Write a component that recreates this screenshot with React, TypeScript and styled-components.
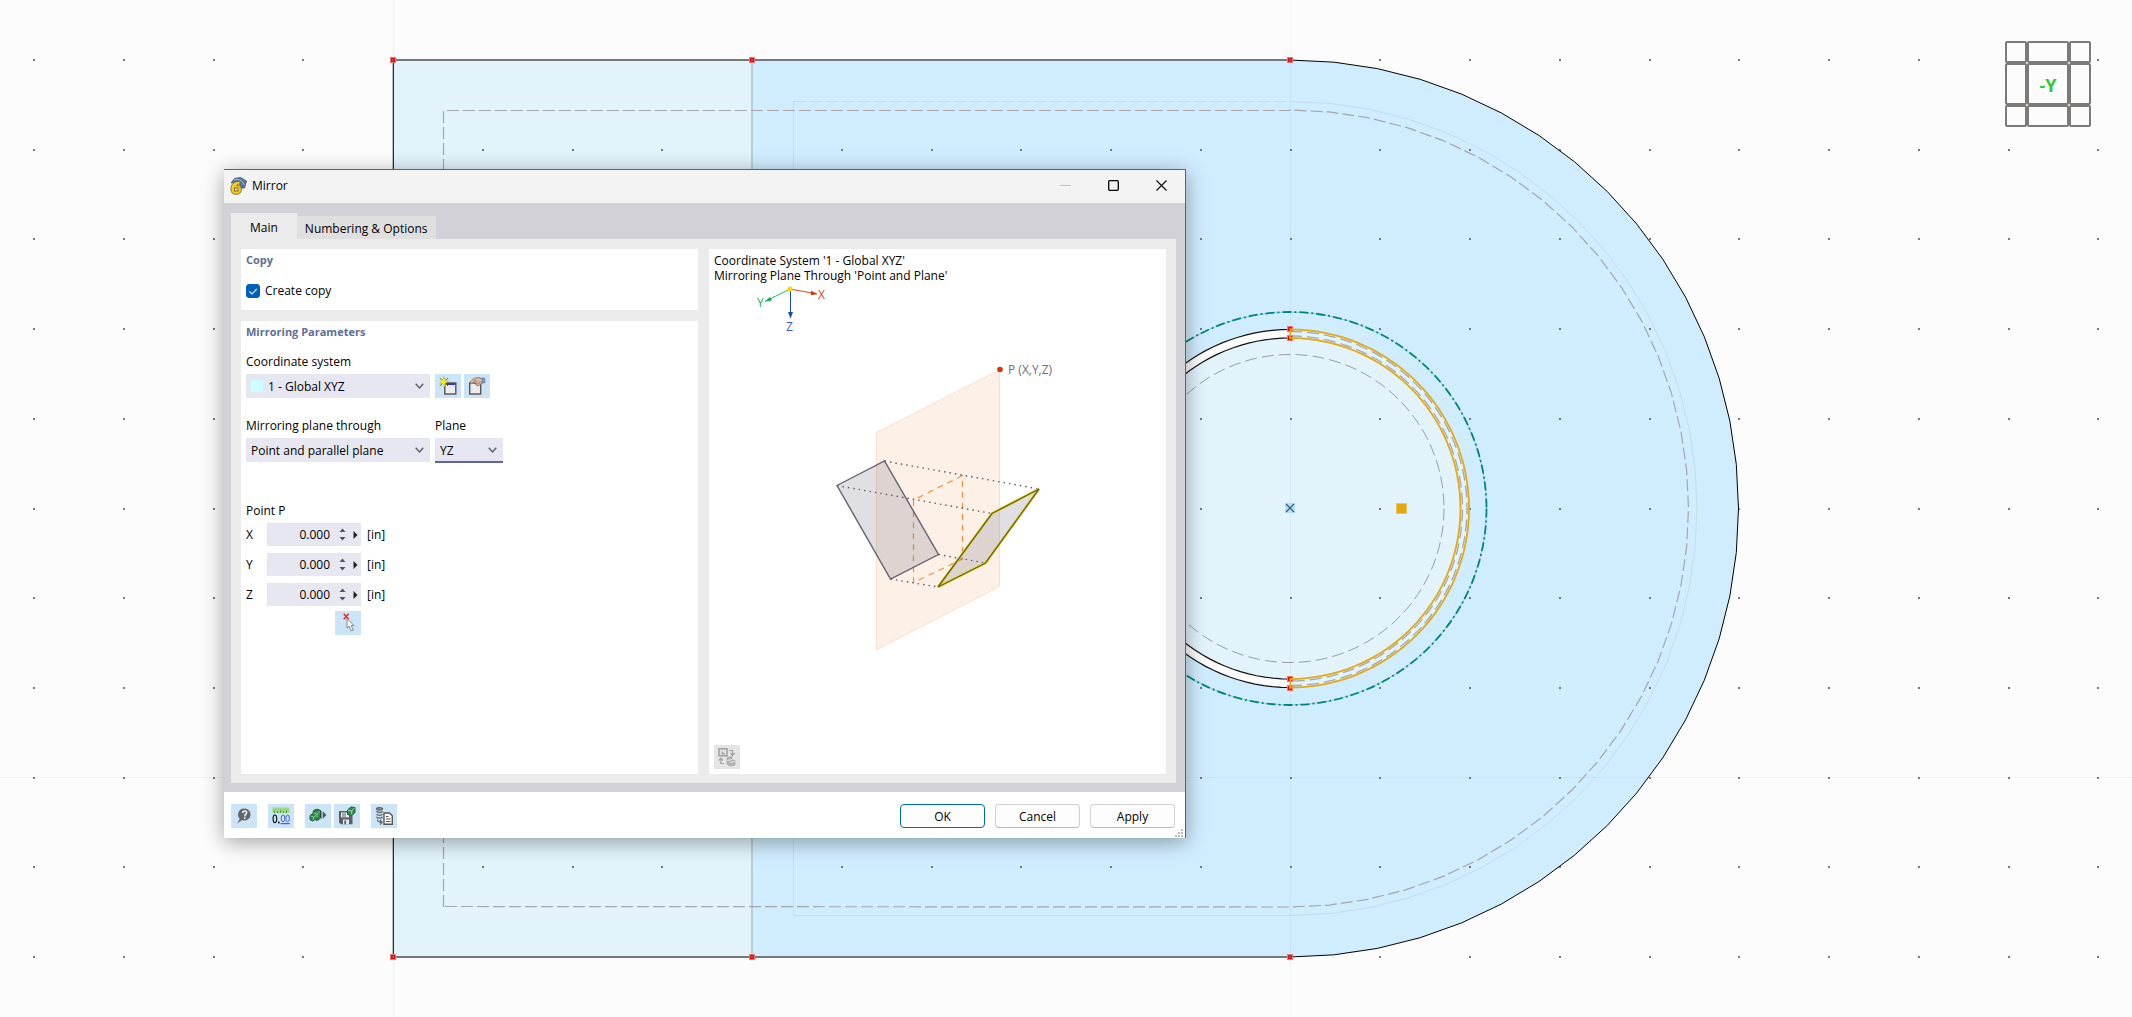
import React, { useState } from 'react';
import styled, { createGlobalStyle } from 'styled-components';

const Global = createGlobalStyle`
  *, *::before, *::after { box-sizing: border-box; }
  body { margin: 0; background: #fcfcfc; overflow: hidden; }
  body, button, input, select { font-family: "Open Sans", "Noto Sans", sans-serif; font-size: 12px; color: #000; }
  svg { display: block; }
`;

const Workspace = styled.main`
  position: relative;
  width: 100%;
  height: 100vh;
  overflow: hidden;
`;

const Scene = styled.svg`
  width: 100%;
  height: 100%;
`;

/* ---------- view cube ---------- */

const ViewCube = styled.nav`
  position: absolute;
  top: 41px;
  right: 41px;
  display: grid;
  grid-template: 22px 42px 22px / 22px 42px 22px;
`;

const CubeFace = styled.button`
  display: flex;
  align-items: center;
  justify-content: center;
  padding: 2px 0 0;
  border: 2px solid #7c7979;
  border-radius: 2px;
  background: #fcfcfc;
  color: #33cc33;
  font: bold 18px "Noto Sans", "Open Sans", sans-serif;
`;

/* ---------- dialog frame ---------- */

const Dialog = styled.section`
  position: absolute;
  left: 224px;
  top: 169px;
  width: 962px;
  max-width: 100%;
  display: flex;
  flex-direction: column;
  border-top: 1px solid #606468;
  border-right: 1px solid #606468;
  background: #fff;
  box-shadow: 0 4px 20px rgba(0, 0, 0, 0.36);
`;

const TitleBar = styled.header`
  display: flex;
  align-items: center;
  height: 33px;
  padding: 0 0 2px 6px;
  gap: 5px;
  background: #f3f3f3;
`;

const Title = styled.h1`
  flex: 1;
  margin: 0;
  font-size: 12px;
  font-weight: 400;
  line-height: 18px;
`;

const WindowControls = styled.div`
  display: flex;
`;

const WindowButton = styled.button`
  display: flex;
  align-items: center;
  justify-content: center;
  width: 48px;
  height: 31px;
  padding: 0;
  border: 0;
  background: none;
`;

const Body = styled.div`
  padding: 10px 9px 9px 7px;
  background: #d2d1d7;
`;

const TabList = styled.div`
  display: flex;
  align-items: flex-end;
`;

const Tab = styled.button<{ $active?: boolean }>`
  height: ${p => (p.$active ? 26 : 23)}px;
  padding: ${p => (p.$active ? '4px 19px 0' : '2px 8px 0')};
  border: 0;
  background: ${p => (p.$active ? '#ebebeb' : '#dfdfdf')};
  line-height: 20px;
`;

const TabPanel = styled.div`
  display: grid;
  grid-template-columns: 1fr 1fr;
  gap: 11px;
  min-height: 544px;
  padding: 10px 10px 9px;
  background: #ebebeb;
`;

const Column = styled.div`
  display: flex;
  flex-direction: column;
  gap: 11px;
`;

const Group = styled.section<{ $fill?: boolean }>`
  flex: ${p => (p.$fill ? '1' : 'none')};
  padding: 1px 5px 11px;
  background: #fff;
`;

const GroupTitle = styled.h2`
  margin: 0;
  color: #5c6e95;
  font-size: 11px;
  font-weight: 700;
  line-height: 20px;
`;

/* ---------- form parts ---------- */

const CheckLabel = styled.label`
  display: flex;
  align-items: center;
  gap: 5px;
  margin-top: 13px;
  line-height: 16px;
`;

const CheckBox = styled.span`
  position: relative;
  width: 14px;
  height: 14px;

  input {
    appearance: none;
    display: block;
    width: 14px;
    height: 14px;
    margin: 0;
    border: 1px solid #8a8a8a;
    border-radius: 3px;
    background: #fff;
  }
  input:checked { border-color: #005fb8; background: #005fb8; }
  svg { position: absolute; inset: 0; pointer-events: none; }
`;

const FieldRow = styled.div<{ $top: number }>`
  display: flex;
  align-items: flex-end;
  gap: 5px;
  margin-top: ${p => p.$top}px;
`;

const Field = styled.div<{ $width: number }>`
  display: flex;
  flex-direction: column;
  gap: 3px;
  width: ${p => p.$width}px;
`;

const FieldLabel = styled.label`
  line-height: 18px;
  white-space: nowrap;
`;

const SelectBox = styled.div<{ $focused?: boolean; $swatch?: boolean }>`
  position: relative;
  height: 24px;
  background: #e7e7f2;
  box-shadow: ${p => (p.$focused ? '0 1px 0 #6062a8, inset 0 -1px 0 #6062a8' : 'none')};

  select {
    appearance: none;
    width: 100%;
    height: 24px;
    padding: 0 20px 0 ${p => (p.$swatch ? 22 : 5)}px;
    border: 0;
    outline: 0;
    background: transparent;
  }
  svg { position: absolute; right: 6px; top: 9px; pointer-events: none; }
`;

const Swatch = styled.span`
  position: absolute;
  left: 5px;
  top: 6px;
  width: 12px;
  height: 12px;
  background: #ccffff;
`;

const ButtonPair = styled.div`
  display: flex;
  gap: 3px;
`;

const ToolButton = styled.button<{ $muted?: boolean }>`
  display: flex;
  align-items: center;
  justify-content: center;
  width: 26px;
  height: 24px;
  padding: 0;
  border: 0;
  background: ${p => (p.$muted ? '#e5e5e5' : '#cce4f7')};
`;

const PointFields = styled.fieldset`
  width: 137px;
  margin: 40px 0 0;
  padding: 0;
  border: 0;

  legend { padding: 0; margin-bottom: 3px; line-height: 18px; }
`;

const PointGrid = styled.div`
  display: grid;
  grid-template-columns: 21px 94px 22px;
  row-gap: 7px;
  align-items: center;
`;

const SpinBox = styled.div`
  display: flex;
  align-items: center;
  height: 23px;
  background: #e7e7f2;

  input {
    width: 63px;
    padding: 0;
    border: 0;
    outline: 0;
    background: transparent;
    text-align: right;
  }
`;

const Stepper = styled.div`
  display: flex;
  flex-direction: column;
  gap: 1px;
  margin-left: 9px;
`;

const MiniButton = styled.button<{ $gap?: boolean }>`
  display: flex;
  align-items: center;
  justify-content: center;
  width: 7px;
  height: 8px;
  margin-left: ${p => (p.$gap ? 6 : 0)}px;
  padding: 0;
  border: 0;
  background: none;
`;

const Unit = styled.span`
  padding-left: 6px;
`;

const PickRow = styled.div`
  display: flex;
  justify-content: flex-end;
  margin-top: 5px;
  padding-right: 22px;
`;

/* ---------- preview ---------- */

const Preview = styled.section`
  display: flex;
  flex-direction: column;
  padding: 4px 5px 5px;
  background: #fff;
`;

const Caption = styled.p`
  margin: 0;
  line-height: 15px;
`;

const Diagram = styled.svg`
  flex: 1;
  width: 100%;
  min-height: 0;

  text { font: 12px "Open Sans", "Noto Sans", sans-serif; }
`;

/* ---------- footer ---------- */

const Footer = styled.footer`
  position: relative;
  display: flex;
  align-items: center;
  justify-content: space-between;
  padding: 12px 10px 10px 7px;
`;

const ToolGroups = styled.div`
  display: flex;
  gap: 11px;
`;

const Actions = styled.div`
  display: flex;
  gap: 10px;
`;

const ActionButton = styled.button<{ $primary?: boolean }>`
  width: 85px;
  height: 24px;
  padding: 2px 0 0;
  border: 1px solid ${p => (p.$primary ? '#0067c0' : '#d0d0d0')};
  border-bottom-color: ${p => (p.$primary ? '#0067c0' : '#b8b8b8')};
  border-radius: 4px;
  background: #fdfdfd;
  line-height: 18px;
`;

const Grip = styled.svg`
  position: absolute;
  right: 2px;
  bottom: 0;
`;

/* ---------- scene geometry ---------- */

const CX = 1290;
const CY = 508.5;
const TOP = 60;
const BOTTOM = 957;

function arc(r: number, from = -90, to = 90, steps = 32) {
  return Array.from({ length: steps + 1 }, (_, i) => {
    const a = ((from + ((to - from) * i) / steps) * Math.PI) / 180;
    return `${(CX + r * Math.cos(a)).toFixed(2)},${(CY + r * Math.sin(a)).toFixed(2)}`;
  }).join(' L');
}

function GridDots() {
  const dots: React.ReactNode[] = [];
  for (let row = 0; row < 11; row++) {
    for (let col = -4; col < 20; col++) {
      dots.push(
        <rect
          key={`${row}:${col}`}
          x={Math.round(392 + col * 89.75)}
          y={Math.round(59 + row * 89.7)}
          width="2"
          height="2"
        />,
      );
    }
  }
  return <g fill="#77777b" shapeRendering="crispEdges">{dots}</g>;
}

function Node({ x, y }: { x: number; y: number }) {
  return (
    <g shapeRendering="crispEdges">
      <rect x={x - 3} y={y - 3} width="6" height="6" fill="#ff7070" />
      <rect x={x - 2} y={y - 2} width="4" height="4" fill="#f00" />
      <rect x={x - 1} y={y - 1} width="2" height="2" fill="#7d6565" />
    </g>
  );
}

function Model() {
  return (
    <Scene viewBox="0 0 2132 1017" preserveAspectRatio="xMinYMin slice" aria-label="Model view">
      <path d="M0 777.5H2132M1290.5 0V1017" stroke="#f1f4f4" />
      <path d="M393.5 0V1017" stroke="#c8ffff" />
      <rect x="393" y={TOP} width="359" height={BOTTOM - TOP} fill="#e2f3fc" />
      <path d={`M752,${TOP} L${arc(448.5)} L752,${BOTTOM}Z`} fill="#d0edff" />
      <circle cx={CX} cy={CY} r="179" fill="#fcfcfc" />
      <path d={`M${arc(179, -90, 90, 64)}Z`} fill="#e2f3fc" />
      <circle cx={CX} cy={CY} r="170" fill="#e2f3fc" />
      <path d="M1290.5 60V957M752 777.5H1650" stroke="#8fb8cc" strokeOpacity="0.16" />
      <GridDots />
      <g fill="none">
        <path d="M752 60V957" stroke="#b9ccd7" strokeWidth="2" />
        <path d={`M393 ${TOP}H1290M393 ${BOTTOM}H1290`} stroke="#75797e" strokeWidth="2" />
        <path d="M393.5 60V957" stroke="#20343a" />
        <path d="M392.5 60V957" stroke="#b8c0c0" />
        <path d={`M${arc(448.5)}`} stroke="#000" />
        <path d="M793.5 101.5H1290" stroke="#c3dde9" strokeDasharray="13 3" />
        <path d={`M793.5 101V915.5H1290M${arc(407)}`} stroke="#c3dde9" />
        <path
          d={`M443.5 907V110.5H${CX} L${arc(398.5)} L443.5 906.5`}
          stroke="#a4a6ac"
          strokeDasharray="12 4"
          strokeWidth="1.2"
        />
        <circle cx={CX} cy={CY} r="154" stroke="#989ea4" strokeDasharray="12 5" />
        <circle cx={CX} cy={CY} r="196.5" stroke="#9cc9cf" />
        <circle cx={CX} cy={CY} r="196.5" stroke="#008482" strokeWidth="1.8" strokeDasharray="9 3 2 3" />
        <path d={`M${arc(179, 90, 270, 64)}M${arc(170.5, 90, 270, 64)}`} stroke="#111" strokeWidth="1.2" />
        <path
          d={`M${arc(177, -90, 90, 64)}M${arc(172.5, -90, 90, 64)}`}
          stroke="#a3a6ab"
          strokeDasharray="12 5"
          strokeWidth="1.3"
        />
      </g>
      <Node x={393} y={60} />
      <Node x={752} y={60} />
      <Node x={1290} y={60} />
      <Node x={393} y={957} />
      <Node x={752} y={957} />
      <Node x={1290} y={957} />
      <Node x={1290} y={329} />
      <Node x={1290} y={338} />
      <Node x={1290} y={679} />
      <Node x={1290} y={688} />
      <path
        d={`M1290.5,329.5 L${arc(179, -90, 90, 64)} L1290.5,679 L${arc(170.5, 90, -90, 64)}Z`}
        fill="none"
        stroke="#e3a812"
        strokeWidth="1.8"
      />
      <rect x="1285" y="503" width="10" height="10" fill="#b2e2fb" />
      <path d="M1286 512L1294 504M1286 504L1294 512" stroke="#40565f" strokeWidth="1.2" fill="none" />
      <rect x="1396" y="503" width="11" height="11" fill="#eac565" />
      <rect x="1397" y="504" width="9" height="9" fill="#e3a812" />
    </Scene>
  );
}

/* ---------- icons ---------- */

const Chevron = () => (
  <svg width="9" height="7" viewBox="0 0 9 7" fill="none" stroke="#5a5a60" strokeWidth="1.3">
    <path d="M.7 .7L4.5 5L8.3 .7" />
  </svg>
);

const AppIcon = () => (
  <svg width="17" height="18" viewBox="0 0 17 18">
    <path d="M1 6L4.5 1.5L10.5 .5L16.5 4L14.5 11L11 11L9 5L4 5.5Z" fill="#55789e" stroke="#3e4d60" strokeWidth=".8" />
    <path d="M4 3C8 1.5 12 3 14.5 8" fill="none" stroke="#a5c3dc" />
    <path
      d="M10 4.6C4 3.4 .8 7.6 .9 12.3C1 15.8 3 17.4 6 17.4C9.4 17.4 11.4 15.6 11.4 12.3C11.4 9.6 9.6 8.4 6.6 8.6C7.2 7.4 8.2 7.2 10 7.3Z"
      fill="#f2cd22"
      stroke="#75601a"
      strokeWidth=".8"
    />
    <rect x="4.6" y="11" width="3.4" height="3" fill="#fff0a0" stroke="#6b5a1d" strokeWidth=".9" />
  </svg>
);

const NewIcon = () => (
  <svg width="18" height="20" viewBox="0 0 18 20">
    <rect x="5.8" y="7" width="11" height="11" fill="#ececec" stroke="#555" strokeWidth="1.4" />
    <rect x="6.5" y="7" width="9.7" height="2" fill="#3038c8" />
    <path d="M.8 2L9 10M.8 10L9 2" stroke="#6b6b50" />
    <path d="M4.9 .8L6.1 4.3L9.7 5.2L6.5 6.9L6 10.6L3.7 7.8L.5 8.1L2.6 5.4L1 2.8L4 3.6Z" fill="#f5ee1d" stroke="#aaa324" strokeWidth=".5" />
  </svg>
);

const EditIcon = () => (
  <svg width="18" height="20" viewBox="0 0 18 20">
    <rect x="1.7" y="7" width="11" height="11" fill="#ececec" stroke="#555" strokeWidth="1.4" />
    <path d="M10 2L17 1.5L17.5 7L13 8Z" fill="#6f97cc" />
    <path d="M2 6.2L6 2.3L11 1.5L15 3.5L13.2 8L10 10L7.8 9L8.3 7L5.5 6.2L3.5 8Z" fill="#d9b89c" stroke="#80644f" strokeWidth=".7" />
    <path d="M6 4.5L9 5M9.5 7.8L12.5 6" stroke="#80644f" strokeWidth=".7" />
  </svg>
);

const PickIcon = () => (
  <svg width="14" height="20" viewBox="0 0 14 20">
    <path d="M2.7 .7L7.7 6.2M7.7 .7L2.7 6.2" stroke="#e22" strokeWidth="1.4" />
    <path d="M6 5.5V15L8.2 13.2L10.2 18L12.3 17L10.2 12.6H13Z" fill="#fff" stroke="#777" strokeWidth=".9" />
  </svg>
);

const SwapIcon = () => (
  <svg width="18" height="20" viewBox="0 0 18 20" fill="none" stroke="#a3a3a3">
    <rect x="1" y="1.8" width="8" height="7" strokeWidth="1.6" />
    <path d="M3.5 7.5V4.5H5V6H7V7.5Z" fill="#a3a3a3" stroke="none" />
    <path d="M11 3.5H14.5V8M12.5 6L14.5 8.3L16.7 6" strokeWidth="1.2" />
    <path d="M2.8 11.5V16.5H6M.8 13.5L2.8 11.2L4.8 13.5" strokeWidth="1.2" />
    <path d="M9 10.5L14 9.5V13L17 13.5V18L12 19L9 17Z" fill="#b4b4b4" stroke="#a3a3a3" strokeWidth=".7" />
    <path d="M9.5 13.5L14 12.5M12 15.5L16.5 14.5" stroke="#e8e8e8" />
  </svg>
);

const HelpIcon = () => (
  <svg width="16" height="18" viewBox="0 0 16 18">
    <path d="M8.5 1.5A6 6 0 1 1 6.2 13L1.2 16.5L3.8 11.7A6 6 0 0 1 8.5 1.5Z" fill="#666" />
    <path d="M6.8 6C6.8 3.4 10.6 3.4 10.6 5.7C10.6 7.5 8.7 7.3 8.7 9.4M8.7 10.5V12" stroke="#e8f3fc" strokeWidth="1.6" fill="none" />
  </svg>
);

const UnitsIcon = () => (
  <svg width="18" height="20" viewBox="0 0 18 20">
    <rect x=".5" y="1.5" width="17" height="5.5" fill="#9bdb7f" />
    <path d="M2.5 4V7M5.5 5V7M8.5 4V7M11.5 5V7M14.5 4V7" stroke="#5f9c4c" />
    <ellipse cx="2.9" cy="12.8" rx="1.8" ry="3.8" fill="none" stroke="#111" strokeWidth="1.2" />
    <rect x="6" y="15.6" width="1.6" height="1.8" fill="#111" />
    <g fill="none" stroke="#3d63e0">
      <ellipse cx="11" cy="12.4" rx="1.8" ry="3.4" />
      <ellipse cx="15.6" cy="12.4" rx="1.8" ry="3.4" />
      <path d="M8.6 17.6H17.8" strokeWidth="1.2" />
    </g>
  </svg>
);

const LoadIcon = () => (
  <svg width="18" height="18" viewBox="0 0 18 18">
    <path d="M1 8.5L4 6.5L4.5 3.5L8 2.2L11.5 3.5V11L8.5 13.5L6 12.5L3.5 14L1 12.5Z" fill="#2d8a4c" stroke="#1c5230" />
    <path d="M4.5 6L8 7L11 4.5M8 7V10M1.5 9L4.5 10L7 8.5M4.5 10V13" stroke="#8bd39f" fill="none" strokeWidth=".9" />
    <path d="M12.5 4V12" stroke="#8494a1" />
    <path d="M13.7 4.2L17.4 8L13.7 11.8Z" fill="#555" />
  </svg>
);

const SaveIcon = () => (
  <svg width="18" height="20" viewBox="0 0 18 20">
    <path d="M1 5H14.5V18.3H3L1 16.3Z" fill="#5f5f5f" />
    <rect x="3" y="6.5" width="8" height="4.8" fill="#e8f3fc" />
    <path d="M4 8H8M4 10H8" stroke="#5f5f5f" />
    <rect x="5" y="13.5" width="6" height="4.8" fill="#dcebf8" />
    <rect x="6.3" y="14.5" width="1.8" height="3.8" fill="#5f5f5f" />
    <path d="M9.5 4L13 1L17 1.5V6.5L14 9.5L9.5 8.5Z" fill="#2d8a4c" stroke="#1c6335" />
    <path d="M10 4.3L13.7 5L16.5 2M13.7 5V8.5" stroke="#9bdfae" fill="none" />
  </svg>
);

const ExportIcon = () => (
  <svg width="18" height="20" viewBox="0 0 18 20">
    <g fill="none" stroke="#666" strokeWidth="1.4">
      <ellipse cx="4.5" cy="2.8" rx="3" ry="1.2" fill="#999" />
      <path d="M1.5 5.2C2.5 7 6.5 7 7.5 5.2M1.5 8C2.5 9.8 6.5 9.8 7.5 8M1.5 10.8C2.5 12.5 6.5 12.5 7.5 10.8" />
      <path d="M2.5 13.5C2.5 16 4 16.3 6.8 16.3M5 14L7.2 16.3L5 18.5" strokeWidth="1.2" />
    </g>
    <path d="M9 7H14.5L17.3 9.8V18.3H9Z" fill="#fff" stroke="#555" strokeWidth="1.4" />
    <path d="M11 10.5H13.5M11 13H15.5M11 15.5H15.5" stroke="#555" />
  </svg>
);

/* ---------- dialog content ---------- */

function PreviewDiagram() {
  return (
    <Diagram viewBox="714 283 447 462" preserveAspectRatio="xMidYMid meet" aria-label="Point and plane mirroring">
      <g fill="none">
        <path d="M790 289L817 294" stroke="#cf4a20" />
        <path d="M811 290.8L817.5 294L811 295.2Z" fill="#cf3a08" />
        <path d="M790 289L765 301.5" stroke="#2cb065" />
        <path d="M765 301.5L770 296.9L772 300.6Z" fill="#0da54a" />
        <path d="M790.5 289V318" stroke="#1848c8" />
        <path d="M788 312H793L790.5 318.5Z" fill="#1848c8" />
        <circle cx="790" cy="289" r="2.6" fill="#f7dc00" />
      </g>
      <text x="818" y="299" fill="#cf4a20">X</text>
      <text x="757" y="307" fill="#24ab5c">Y</text>
      <text x="786" y="331" fill="#3c5cd2">Z</text>
      <path d="M876.5 432.5L999.5 370V586.5L876.5 649.5Z" fill="#fdf1e7" stroke="#fadfca" />
      <path d="M962.5 475.5L913.5 500V582.5L962.5 559Z" fill="none" stroke="#f2913c" strokeWidth="1.2" strokeDasharray="6 5" />
      <path
        d="M884.5 461L1039 489M837 485.5L992 513.5M938.5 554.5L985.5 563M890.5 579L938 587"
        fill="none"
        stroke="#5f5a6c"
        strokeWidth="1.4"
        strokeDasharray="1.5 4"
      />
      <path d="M837 485.5L884.5 461L938.5 554.5L890.5 579Z" fill="#60607a" fillOpacity=".2" stroke="#676171" strokeWidth="1.4" />
      <path d="M992 513.5L1039 489L985.5 563L938 587Z" fill="#60607a" fillOpacity=".2" stroke="#eadb24" strokeWidth="2.8" />
      <path d="M992 513.5L1039 489L985.5 563L938 587Z" fill="none" stroke="#655d35" strokeWidth="1.3" />
      <circle cx="1000" cy="369.5" r="2.8" fill="#cf3a08" />
      <text x="1008" y="374" fill="#706d7c">P (X,Y,Z)</text>
    </Diagram>
  );
}

function Coordinate({ axis }: { axis: string }) {
  const [value, setValue] = useState('0.000');
  const step = (by: number) => setValue(v => ((Number(v) || 0) + by).toFixed(3));
  const id = `point-${axis}`;
  return (
    <>
      <label htmlFor={id}>{axis}</label>
      <SpinBox>
        <input id={id} value={value} onChange={e => setValue(e.target.value)} />
        <Stepper>
          <MiniButton aria-label={`Increase ${axis}`} onClick={() => step(1)}>
            <svg width="7" height="4" viewBox="0 0 7 4"><path d="M.5 4L3.5 .5L6.5 4Z" fill="#555" /></svg>
          </MiniButton>
          <MiniButton aria-label={`Decrease ${axis}`} onClick={() => step(-1)}>
            <svg width="7" height="4" viewBox="0 0 7 4"><path d="M.5 0L3.5 3.5L6.5 0Z" fill="#555" /></svg>
          </MiniButton>
        </Stepper>
        <MiniButton $gap aria-label={`${axis} options`}>
          <svg width="5" height="8" viewBox="0 0 5 8"><path d="M.5 0L4.5 4L.5 8Z" fill="#222" /></svg>
        </MiniButton>
      </SpinBox>
      <Unit>[in]</Unit>
    </>
  );
}

export default function App() {
  const [copy, setCopy] = useState(true);
  return (
    <>
      <Global />
      <Workspace>
        <Model />
        <ViewCube aria-label="View cube">
          {Array.from({ length: 9 }, (_, i) => (
            <CubeFace key={i} aria-label={i === 4 ? undefined : `View ${i + 1}`}>{i === 4 ? '-Y' : null}</CubeFace>
          ))}
        </ViewCube>

        <Dialog role="dialog" aria-labelledby="dialog-title">
          <TitleBar>
            <AppIcon />
            <Title id="dialog-title">Mirror</Title>
            <WindowControls>
              <WindowButton aria-label="Minimize" disabled>
                <svg width="11" height="11"><path d="M0 5.5H11" stroke="#c2c2c2" /></svg>
              </WindowButton>
              <WindowButton aria-label="Maximize">
                <svg width="11" height="11"><rect x=".7" y=".7" width="9.6" height="9.6" rx="1" fill="none" stroke="#000" strokeWidth="1.3" /></svg>
              </WindowButton>
              <WindowButton aria-label="Close">
                <svg width="11" height="11"><path d="M.5 .5L10.5 10.5M10.5 .5L.5 10.5" stroke="#111" strokeWidth="1.2" /></svg>
              </WindowButton>
            </WindowControls>
          </TitleBar>

          <Body>
            <TabList role="tablist">
              <Tab $active role="tab" aria-selected="true">Main</Tab>
              <Tab role="tab" aria-selected="false">Numbering &amp; Options</Tab>
            </TabList>
            <TabPanel role="tabpanel">
              <Column>
                <Group>
                  <GroupTitle>Copy</GroupTitle>
                  <CheckLabel>
                    <CheckBox>
                      <input type="checkbox" checked={copy} onChange={e => setCopy(e.target.checked)} />
                      {copy && (
                        <svg width="14" height="14" fill="none" stroke="#d8ebfb" strokeWidth="1.2"><path d="M3.5 7.5L6 10L10.8 5" /></svg>
                      )}
                    </CheckBox>
                    Create copy
                  </CheckLabel>
                </Group>
                <Group $fill>
                  <GroupTitle>Mirroring Parameters</GroupTitle>
                  <FieldRow $top={11}>
                    <Field $width={184}>
                      <FieldLabel htmlFor="system">Coordinate system</FieldLabel>
                      <SelectBox $swatch>
                        <Swatch />
                        <select id="system"><option>1 - Global XYZ</option></select>
                        <Chevron />
                      </SelectBox>
                    </Field>
                    <ButtonPair>
                      <ToolButton aria-label="New coordinate system"><NewIcon /></ToolButton>
                      <ToolButton aria-label="Edit coordinate system"><EditIcon /></ToolButton>
                    </ButtonPair>
                  </FieldRow>
                  <FieldRow $top={19}>
                    <Field $width={184}>
                      <FieldLabel htmlFor="through">Mirroring plane through</FieldLabel>
                      <SelectBox>
                        <select id="through"><option>Point and parallel plane</option></select>
                        <Chevron />
                      </SelectBox>
                    </Field>
                    <Field $width={68}>
                      <FieldLabel htmlFor="plane">Plane</FieldLabel>
                      <SelectBox $focused>
                        <select id="plane"><option>YZ</option><option>XZ</option><option>XY</option></select>
                        <Chevron />
                      </SelectBox>
                    </Field>
                  </FieldRow>
                  <PointFields>
                    <legend>Point P</legend>
                    <PointGrid>
                      <Coordinate axis="X" />
                      <Coordinate axis="Y" />
                      <Coordinate axis="Z" />
                    </PointGrid>
                    <PickRow>
                      <ToolButton aria-label="Pick point"><PickIcon /></ToolButton>
                    </PickRow>
                  </PointFields>
                </Group>
              </Column>
              <Preview>
                <Caption>Coordinate System '1 - Global XYZ'</Caption>
                <Caption>Mirroring Plane Through 'Point and Plane'</Caption>
                <PreviewDiagram />
                <ToolButton $muted aria-label="Switch preview"><SwapIcon /></ToolButton>
              </Preview>
            </TabPanel>
          </Body>

          <Footer>
            <ToolGroups>
              <ToolButton aria-label="Help"><HelpIcon /></ToolButton>
              <ToolButton aria-label="Units and decimal places"><UnitsIcon /></ToolButton>
              <ButtonPair>
                <ToolButton aria-label="Load template"><LoadIcon /></ToolButton>
                <ToolButton aria-label="Save template"><SaveIcon /></ToolButton>
              </ButtonPair>
              <ToolButton aria-label="Export"><ExportIcon /></ToolButton>
            </ToolGroups>
            <Actions>
              <ActionButton $primary>OK</ActionButton>
              <ActionButton>Cancel</ActionButton>
              <ActionButton>Apply</ActionButton>
            </Actions>
            <Grip width="8" height="9" fill="#bdbdbd">
              <path d="M6 0h2v2h-2zM6 3h2v2h-2zM3 3h2v2h-2zM6 6h2v2h-2zM3 6h2v2h-2zM0 6h2v2h-2z" />
            </Grip>
          </Footer>
        </Dialog>
      </Workspace>
    </>
  );
}
